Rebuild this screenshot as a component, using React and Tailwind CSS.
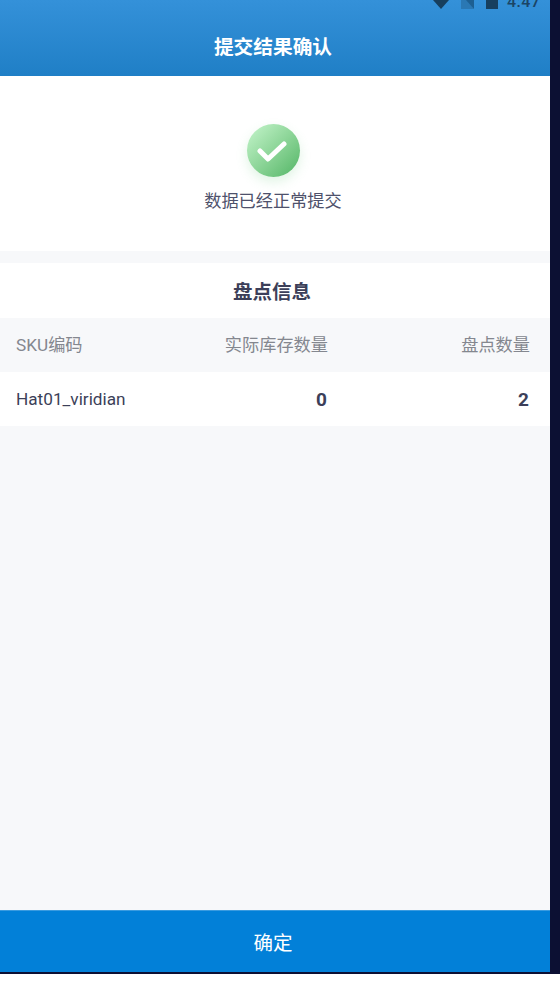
import React from "react";

const StatusBar = () => (
  <div className="absolute top-0 right-0 h-[10px] w-[120px] overflow-hidden text-[#1b4566]">
    <svg className="absolute left-[3px] top-0" width="74" height="10" viewBox="0 0 74 10">
      <path d="M0 0h16l-8 9z" fill="#173f5e" />
      <path d="M28 0h13v9z" fill="#1d5f92" />
      <path d="M28 0h5l8 9H28z" fill="#2a78b4" />
      <rect x="53" y="0" width="12" height="9" fill="#173f5e" />
    </svg>
    <span className="absolute left-[77px] top-[-7px] text-[16px] leading-[18px] font-medium tracking-[0.5px]">
      4:47
    </span>
  </div>
);

const Header = () => (
  <div className="relative h-[76px] shrink-0 flex items-end justify-center pb-[14px] pr-[4px] bg-gradient-to-b from-[#3491d9] to-[#1f7fc6]">
    <StatusBar />
    <h1 className="text-[19.7px] leading-[28px] font-bold text-white">提交结果确认</h1>
  </div>
);

const SuccessBlock = () => (
  <div className="h-[175px] shrink-0 bg-white flex flex-col items-center pt-[48px] pr-[4px]">
    <div className="w-[53px] h-[53px] rounded-full flex items-center justify-center bg-gradient-to-br from-[#c6f6cd] to-[#50b565] shadow-[0_5px_12px_rgba(100,200,120,0.2)]">
      <svg width="32" height="24" viewBox="0 0 32 24" fill="none">
        <path d="M3 12l8 8L27 5" stroke="#fff" strokeWidth="5" strokeLinecap="round" strokeLinejoin="round" />
      </svg>
    </div>
    <p className="mt-[12px] text-[17.2px] leading-[24px] text-[#4e516b]">数据已经正常提交</p>
  </div>
);

const InfoTable = () => (
  <div className="mt-[12px] shrink-0">
    <div className="h-[55px] bg-white flex items-center justify-center pt-[5px] pr-[6px] text-[19.5px] font-bold text-[#3c3f59]">
      盘点信息
    </div>
    <div className="h-[54px] grid grid-cols-[1fr_150px_202px] items-center pt-[2px] pl-[16px] pr-[20px] text-[17.2px] text-[#84878f]">
      <span>SKU编码</span>
      <span className="text-right">实际库存数量</span>
      <span className="text-right">盘点数量</span>
    </div>
    <div className="h-[54px] bg-white grid grid-cols-[1fr_150px_202px] items-center pt-[2px] pl-[16px] pr-[21px] text-[#3c3f59]">
      <span className="text-[17.2px]">Hat01_viridian</span>
      <span className="text-right text-[19px] font-bold">0</span>
      <span className="text-right text-[19px] font-bold">2</span>
    </div>
  </div>
);

export default function App() {
  return (
    <div className="w-[560px] h-[983px] bg-white font-['Roboto','Noto_Sans_CJK_SC',sans-serif]">
      <div className="h-[974px] bg-[#0c1033] pr-[10px] pb-[2px]">
        <div className="relative h-full flex flex-col bg-[#f7f8fa]">
          <Header />
          <SuccessBlock />
          <InfoTable />
          <div className="flex-1" />
          <button className="h-[62px] shrink-0 pt-[5px] pr-[4px] bg-[#0280d8] border-t border-[#3a9be0] text-white text-[19.5px]">
            确定
          </button>
        </div>
      </div>
    </div>
  );
}
